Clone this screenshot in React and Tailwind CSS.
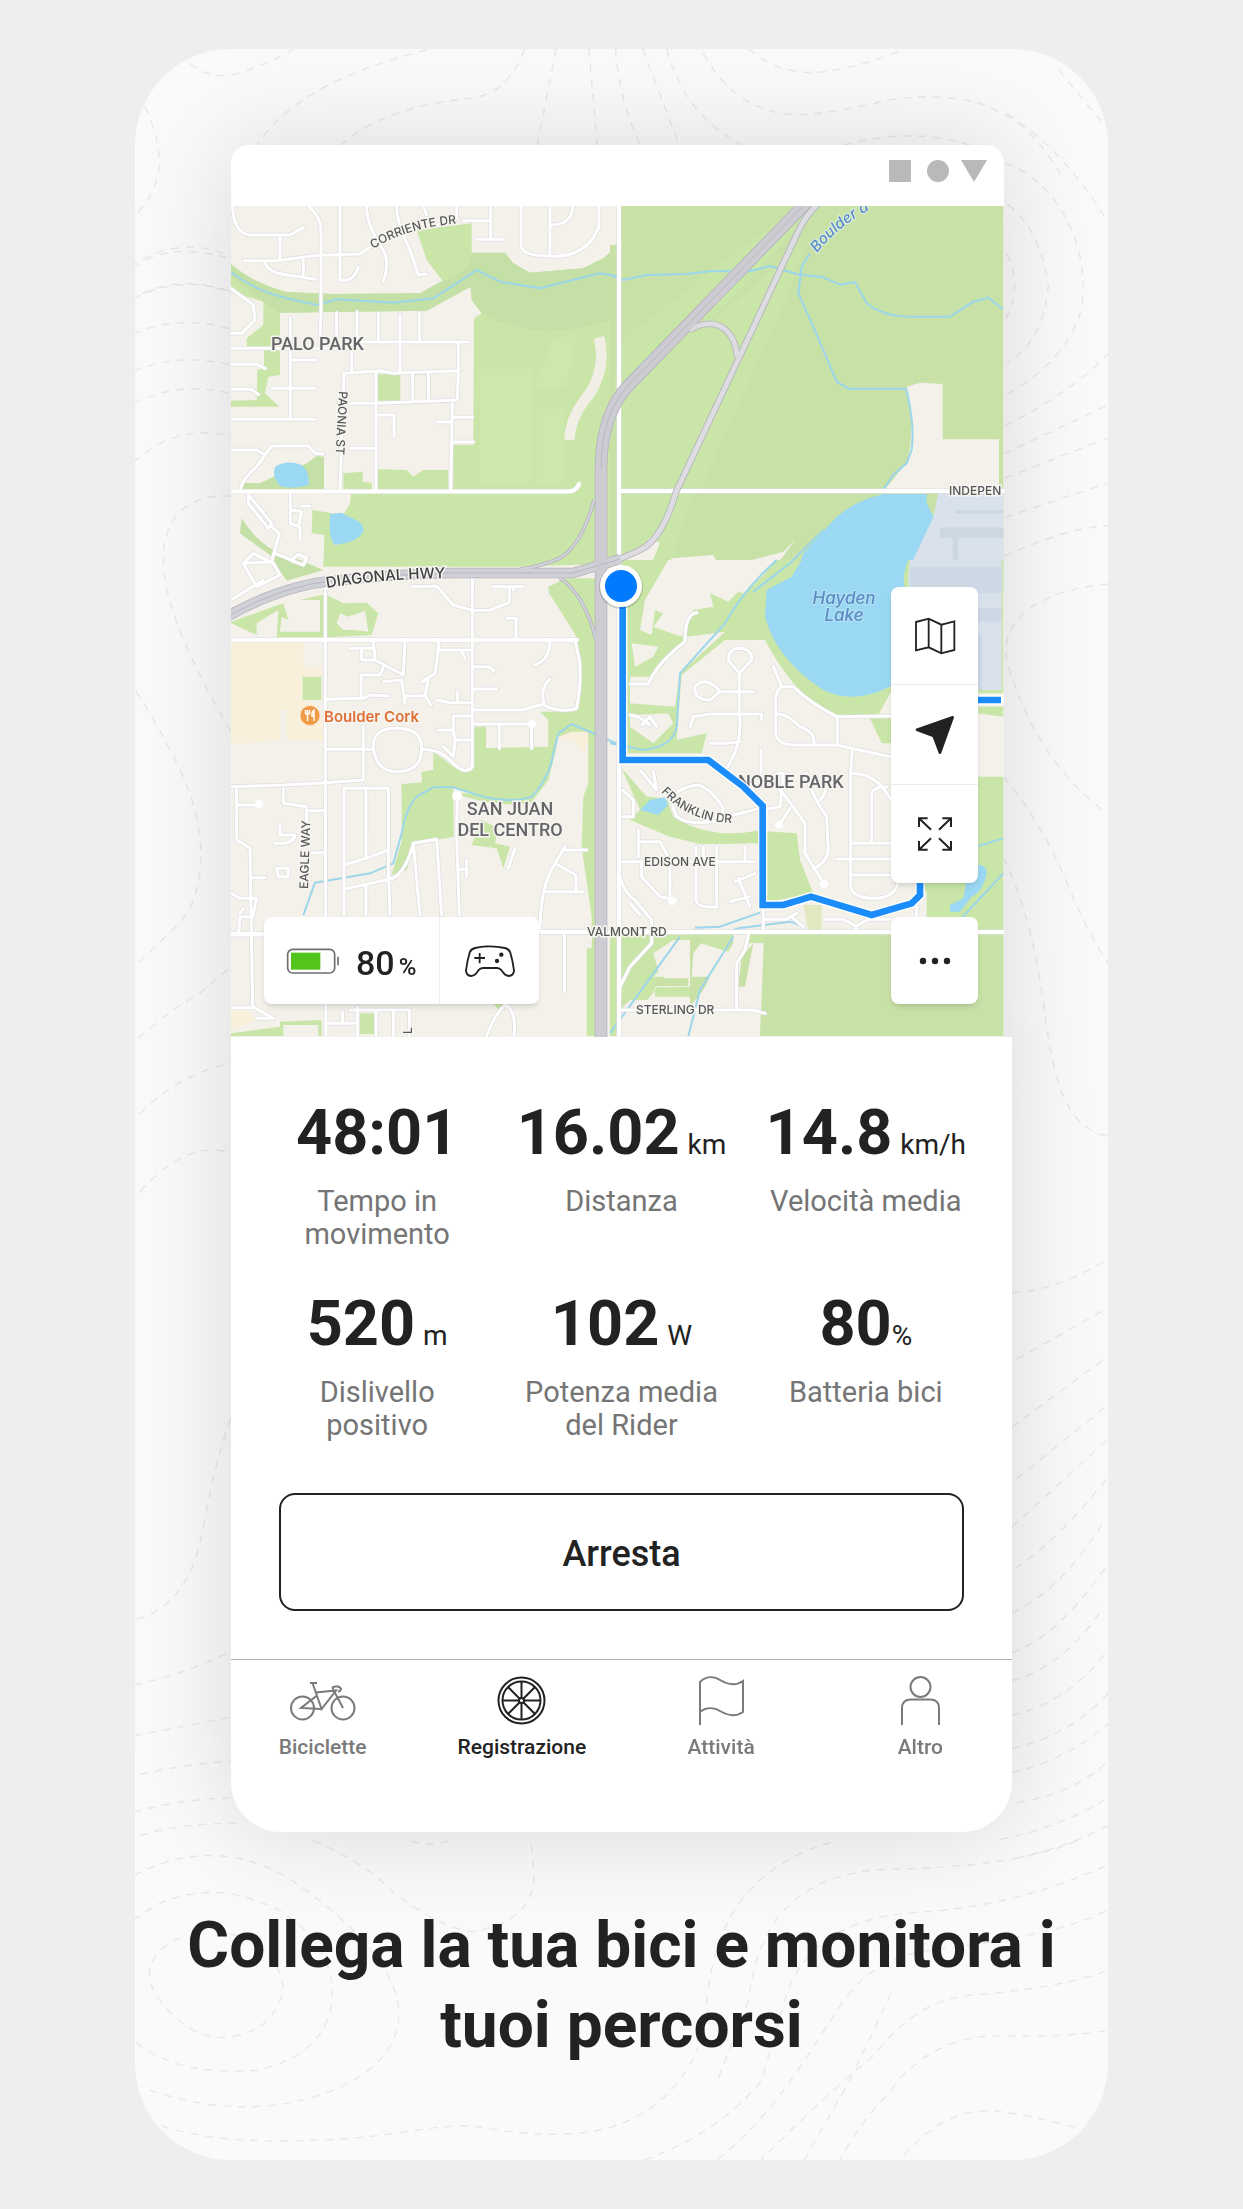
// Each layer of the map is drawn tile by tile, in units of a third of a pixel
const TILES = {
  nw: 'translate(220 130) scale(.33333)',
  ne: 'translate(610 130) scale(.33333)',
  sw: 'translate(220 580) scale(.33333)',
  se: 'translate(610 560) scale(.33333)',
}

const AREAS = [
  // north west
  ['nw', '#c9e6a8', 'M590 300L755 280V368H855L880 400L930 428L1090 415L1150 385L1195 345H1200V1300L900 1310H310L313 1215L275 1210L277 1140L370 1155L390 1120L393 1090H700V945H760L762 565L785 550L755 510L752 470L620 542L180 548V735L145 740L135 790L178 830H33V812L110 810L112 720L132 715V660H80V625L130 585V515L33 485V402Q100 460 200 486L340 492L600 490L668 452L620 390Z'],
  ['nw', '#c5e0a6', 'M755 368H855L880 400L930 428L1090 415L1150 385L1195 345V560Q960 650 785 550L755 510L752 470L620 542L180 548L130 515L33 440V402Q100 460 200 486L340 492L600 490L668 452Q750 430 755 368Z'],
  ['nw', '#c9e6a8', 'M473 733H541V812H473ZM473 1018L560 1020L580 1040L610 1020H685V1080H473ZM370 1030L428 1025V1055L455 1058V1080H370Z'],
  ['nw', '#c5e0a6', 'M65 1058L120 1060L160 1040L260 1000L290 978L312 980V1080H65ZM65 1165Q130 1270 240 1290L310 1320L200 1352L150 1275Q80 1225 60 1210Z'],
  ['nw', '#cce8ac', 'M1000 625L1070 615L1040 770H940ZM780 715H935V1060H780ZM950 835H1030V1060H950Z'],
  ['nw', '#9bd8f3', 'M165 1010Q200 990 240 1003Q270 1020 266 1065Q215 1080 180 1068Q155 1040 165 1010ZM330 1152L365 1148L385 1160Q430 1175 431 1200Q420 1235 345 1245Q325 1230 330 1152Z'],
  ['nw', '#c9e6a8', 'M985 1370L1040 1345H1130V1380H985Z'],
  // north east
  ['ne', '#c8e1a7', 'M25 228H1180V1380H0V345H25Z'],
  ['ne', '#c9e6a8', 'M0 900L620 228H560L25 640ZM33 1080H270L540 480L590 330L280 600L33 860ZM33 1090H250L180 1300H33Z'],
  ['ne', '#f3f1ea', 'M890 770L930 758L998 762V928H1167V1078H825L860 1035L895 990Q915 880 890 770ZM33 1290L90 1260L120 1222L150 1240L125 1300L100 1320L70 1300ZM555 1230L520 1265L330 1315L310 1275L185 1285L140 1380H430Q500 1310 555 1230Z'],
  ['ne', '#d9e2ec', 'M985 1090H1180V1390H895L890 1310L970 1160Z'],
  ['ne', '#cbd7e1', 'M990 1192H1180V1224H990ZM1028 1224H1045V1300H1180V1390H1010V1300H1028ZM1035 1140H1180V1150H1035Z'],
  ['ne', '#d9e2ec', 'M1045 1245H1180V1300H1070Q1040 1290 1045 1245Z'],
  ['ne', '#9bd8f3', 'M820 1092H950V1120L970 1160L900 1310L880 1390H470L500 1350H550L565 1320L580 1270L680 1160Q740 1110 820 1092Z'],
  // south west
  ['sw', '#f9f0dc', 'M33 185H250V260H305V290L248 292V360L290 375V405H310V482H200V390H180V480L80 490H33ZM1015 460L1050 440L1120 455L1090 520L1060 480L1015 475ZM33 1290H80L110 1320L33 1352Z'],
  ['sw', '#c9e6a8', 'M248 290H304V360H248ZM33 125L190 70L205 120L185 110L180 155H300V60L240 60L305 45H320L370 70L440 68L475 100L455 165L320 172H170L175 90L110 130V165L33 130ZM985 35L1020 0H1130V1368H1100V1105H1115V1010L1085 800L1090 650L1105 610V540L1105 455H1055L1015 470L985 600L935 665Q800 665 760 640L700 620L640 640L580 680L540 800L515 885L560 870L585 790L700 770V640L760 640H545V612H605V575L640 570V515L700 560L760 570V440H798V505H985V420L960 395H1060L1085 300L1070 170Z'],
  ['sw', '#c9e6a8', 'M785 720L835 745L825 790L870 800L850 865L830 805L755 795ZM700 640Q850 690 935 665L985 600L1010 500H985L760 505V640ZM545 780V612L700 600V770L585 790ZM420 1300H465V1362H420ZM180 1325L305 1320V1368H33V1360L180 1340ZM820 1270H850L835 1290Z'],
  ['sw', '#f3f1ea', 'M350 130L360 100L385 110L435 92L445 155L400 150L370 150ZM190 1335H295V1368H190Z'],
  // south east
  ['se', '#c9e6a8', 'M33 0H1180V400H840L800 475L680 470Q560 420 465 240H345L215 345L200 540L290 520L275 580H33Z'],
  ['se', '#f3f1ea', 'M175 0H500Q440 70 400 100L385 95L355 125L300 100L310 140L250 150L215 230L130 200L160 160L135 150L125 225L90 210L105 120L175 0ZM65 250L145 260L130 290L75 320ZM60 430V350H130L230 230L345 215L210 340L195 440ZM60 465L175 460L190 490L130 550L60 500Z'],
  ['se', '#9bd8f3', 'M575 0H895Q870 60 890 100V370L840 380Q730 435 640 390Q500 300 465 170L470 90L545 50Z'],
  ['se', '#d9e2ec', 'M900 0H1175V390H895V40Z'],
  ['se', '#ccd8e3', 'M900 20H1175V100H900ZM1100 145H1175V185H1100ZM1100 220H1115V390H1100Z'],
  ['se', '#c9e6a8', 'M1100 440H1180V470L1100 460ZM1100 650H1180V1110H950V1000L930 960H1100ZM780 475H850V550H815ZM35 625L110 710L170 715L190 770Q300 840 440 812L560 820L570 900L610 1000L450 1030V850L270 852L180 830L60 780L90 750Z'],
  ['se', '#c9e6a8', 'M33 1125L460 1122H1180V1428H450L465 1150H430L405 1280L380 1290L420 1122H370V1180L240 1140L165 1250H240V1320H60L20 1360L33 1428H0V1122Z'],
  ['se', '#f3f1ea', 'M60 1428V1390L165 1250H130L210 1175L240 1170V1280L170 1282L135 1280V1310H240L245 1350L300 1270L370 1150H465L450 1428ZM250 1175L325 1175L300 1230H250ZM130 1180L190 1140H245L235 1250H150Z'],
  ['se', '#c8e1a7', 'M462 1130H1180V1428H450ZM240 1130L280 1140L250 1180L245 1250H300L280 1290L240 1340ZM140 1255H235V1278H135ZM395 1190L430 1150L405 1280H385Z'],
  ['se', '#e1e8bf', 'M580 1035H635V1110H595Z'],
  ['se', '#9bd8f3', 'M90 750L120 720L165 712L175 735L145 765ZM1020 1035L1060 1015L1075 930L1110 915Q1140 920 1125 960Q1110 1000 1085 1010L1050 1055H1020Z'],
]

const STREAMS = [
  ['nw', 'M33 425Q100 480 200 505L290 525L350 508L520 518L640 505L770 420L840 455L960 475L1140 430L1200 440'],
  ['ne', 'M0 435L40 450L110 435L230 432L300 424L420 424L480 408L560 432L640 442L690 464L735 456L770 520Q820 560 900 560H1020L1090 515L1135 503L1178 537M600 370L575 410L565 490L610 590L680 755L715 776H888Q915 880 905 960L890 1000L850 1035L820 1078'],
  ['ne', 'M640 1200L540 1300L430 1385'],
  ['sw', 'M250 1005L285 908L450 880L520 850L545 760Q560 680 590 650L640 622H700L790 650Q880 670 935 650Q990 590 1000 520L1015 460L1055 432L1200 495'],
  ['se', 'M500 0Q400 90 345 190L210 340L200 500Q190 560 100 570L0 550M255 1103L330 1100L450 1058M370 1110L385 1105L540 1085L570 1095M210 1130L0 1420M370 1130L270 1290L235 1428M1100 860L1180 835M1040 1090L1180 940'],
]

const STREETS = [
  ['nw', 'M38 228Q40 310 90 315H210L250 293M180 318V388M72 392H170L300 375L420 372L460 345M265 228Q305 260 303 310V540L300 640M360 228V450Q400 460 415 410M440 228Q440 290 490 360Q510 400 490 455M530 228Q530 280 570 360L595 435L620 432M135 395Q140 430 220 437L285 448M250 385V435M610 228L620 255M710 228V265L650 285M812 228V325M730 272H812M770 328H850M903 228V350Q910 378 990 378Q1100 385 1137 290V228M990 228V375M995 285Q1055 285 1058 228'],
  ['nw', 'M33 475L100 525L105 570L65 610H33M33 655H390M33 703H110L135 715M33 778H95L115 793M33 868H240L285 868M211 565V865M211 690H288M155 775H285M350 548V620M411 545V640M475 550V636M540 555V725M598 548V636M395 636H745M395 640V725M360 1080L372 730L480 722L520 730L715 722V636M715 722L712 810L470 820H390M468 730V1080M578 725V815M625 725V815M470 855H522V920M390 955H465M697 820L692 1080M650 876H697M697 862H757M697 936H760'],
  ['nw', 'M33 960H110L132 972M60 1080Q65 1050 110 1010L155 948H265L285 970L310 972M85 1095V1120L145 1195L155 1180L90 1100M155 1190L178 1210L155 1295L70 1300L100 1270L160 1300L180 1335L110 1370L70 1300M211 1090V1180L235 1190L245 1145L215 1140M240 1190V1228M245 1128H270M165 1270L215 1290L235 1273L260 1285L250 1305L215 1292M758 1320V1380M820 1370H880V1380'],
  ['sw', 'M33 60L130 0M316 0V600L318 1368M757 0V560Q735 590 690 540Q650 505 605 508M575 20L650 18L700 75L760 92L810 90L868 68V20M825 20H910M860 115H888V172M390 205H460V180L465 240L550 285L555 180M425 205V240H465M490 262L480 285H423V355M316 358L430 355L450 345L505 348M490 305L545 300L555 370V348H610M655 180V210L645 280L605 305L625 300L615 345L632 375M655 210H750M725 215L735 235M757 260H805L822 272M757 327H830M650 360L690 368H757M712 335V365M990 180Q990 240 945 255M990 298Q960 320 972 372L905 390H757M972 375Q1020 400 1070 385Q1085 300 1078 240L1065 180'],
  ['sw', 'M757 432H935V505M838 432V505M700 408H757M700 408V450H655M700 450L705 480H755M705 480L700 530L670 500M316 508H455M430 440V600L316 608L190 615L33 620M460 505Q455 445 530 445Q605 445 605 505Q605 575 530 575Q470 575 460 505M50 620V780L90 805L98 1280L160 1315H110M50 675H120M190 625V670L260 680V740M270 692H316M275 818H316M165 790Q220 795 225 765H180V730M175 890H205V865H170ZM95 893H135M33 940L60 955H110L98 1010H60L55 1065M60 1000L70 985M33 1065H130M33 1283H98'],
  ['sw', 'M372 1005V625H505V870L510 1005M438 625V835L500 812M372 855L438 835M372 928L520 895Q560 870 580 790L600 1005M438 915V1005M580 790L650 778L665 1005M712 650L710 770L718 1005M720 868H740V840M740 868V890M885 805L865 865M1035 800L1005 850Q960 920 960 1050M1035 810H1100M1005 850L1068 885V940M970 935H1090M960 1057H1105M1033 1060V1235M316 1330H412V1280M390 1290H568V1340M412 1330V1368M368 1295V1330M468 1290V1368M520 1290V1368M568 1290V1368M855 1275Q825 1300 800 1368M855 1275Q890 1290 882 1368'],
  ['se', 'M60 372H115Q140 310 225 245Q225 160 260 158M388 340L355 300Q355 265 390 265Q430 270 425 300L388 340V460Q400 560 340 640M330 395Q290 345 255 380Q250 420 300 420L330 395H430M240 500L250 470L300 462H455V480M300 550H350L390 545M60 465L85 470L120 495M95 495L120 470L140 500M490 320L515 380H550Q600 430 680 470L840 468M515 380Q490 400 497 440V520Q500 555 560 555H680L840 590M500 462Q530 460 570 500Q615 515 612 550M682 475V555M727 570L722 640V980Q730 1015 790 1015Q860 1015 865 960M722 640Q800 640 840 715M785 850V700Q790 680 830 680M722 850H840M680 897H840M722 945H840'],
  ['se', 'M90 630L140 690L130 635M38 690L70 720V770H38M200 770Q160 690 260 675Q300 680 340 745L330 780Q240 800 200 770M330 775L450 745M453 570V640M500 640H520L510 740L455 750M500 640Q480 660 520 700L585 790V880L640 970M590 640Q600 700 650 770L655 870Q650 910 610 925M640 640Q660 690 630 720M540 745L505 800M25 620V930Q40 1000 75 1020L125 1080V1150L60 1220L30 1280L25 1428M33 905H435M85 810V890M85 845H150L180 900V1025M95 905V950L150 1010L200 1020M258 860V1020Q260 1045 320 1040V860M280 860V900M405 860V900M375 965L435 940M385 955L420 1040M360 1025L420 1010M60 1030L90 1065M460 1050V1115M460 1078H530L560 1060M550 1075L580 1100M645 1078H700L738 1098L775 1078H840M738 1098V1115M920 1040V1110M415 1125L405 1170L380 1210V1345M33 1350H430L465 1360'],
]

const MAIN_ROADS = 'M619 204V1037M231 491.500H570Q577 490 579 484M621 491H1003M231 640H577M231 934H270M540 932H590L760 932H1003'

const BIG_SHAPES = [
  { d: 'M818 204Q805 216 798 232L738 360L676 492Q662 540 640 550L604 566', width: 5, color: '#dcdce1' },
  { d: 'M690 330Q706 320 720 326Q736 335 737 357', width: 5, color: '#dcdce1' },
  { d: 'M594 500Q582 545 560 558Q540 567 520 569', width: 2, color: '#d3d2da' },
  { d: 'M596 640Q585 595 560 578', width: 2, color: '#d3d2da' },
  { d: 'M228 616Q285 584 340 580Q400 574 453 573L573 573L620 559', width: 9, color: '#d0d0d7' },
  { d: 'M806 203L628 386Q601 415 601 470V1037', width: 11, color: '#cdccd3' },
]

// Dashed height lines behind the phone; the groups stretch, the dashes do not
const CONTOURS = [
  ['translate(130 40) scale(.6313 .3333)', 'M95 70Q120 115 160 105Q210 80 260 27M470 30Q260 130 200 320M625 27Q600 160 540 175Q400 200 335 315M675 27L645 315M727 27L740 315M769 27Q775 180 808 315M812 27L870 315M850 27Q880 230 970 315M908 40Q960 220 1060 225Q1130 215 1200 180Q1320 150 1380 220Q1430 260 1480 420M980 27Q1030 110 1100 95Q1170 75 1225 27M1130 315Q1240 260 1330 315M0 680Q80 580 160 650M20 760Q90 700 160 760'],
  ['translate(130 1840) scale(.6313 .3333)', 'M290 0Q370 60 420 160Q500 270 545 272Q640 240 640 100L635 0M5 105Q130 -20 250 110C460 380 480 620 320 750Q180 850 20 740M5 240Q60 150 140 155C350 190 390 640 190 690Q70 700 10 605M80 290Q10 350 40 460Q90 590 145 590Q230 580 243 440Q230 290 130 270M50 855Q140 910 290 898C440 890 480 840 560 860Q680 900 760 860Q860 800 900 620M1110 5Q950 90 920 400Q910 500 915 520M445 0Q475 20 505 0M1545 75Q1400 200 1240 215Q1080 240 1040 460L1000 720Q930 880 815 957M1500 0Q1400 80 1200 85Q1000 100 980 480L930 720M1545 210Q1480 280 1260 330Q1180 350 1130 480C1060 680 1020 820 930 957M1545 390Q1480 440 1320 465Q1240 490 1180 640Q1080 800 1000 957M1545 570Q1480 590 1360 585Q1260 600 1200 760Q1150 860 1125 957M1225 945Q1290 800 1370 810Q1420 820 1500 860M1068 957Q1100 850 1140 720Q1180 560 1210 440'],
  ['translate(100 40) scale(.3333 .7015)', 'M135 95Q180 140 178 180Q165 225 100 252M100 326Q200 285 393 312M100 368Q240 335 393 358M100 419Q240 390 393 412M100 472Q240 445 393 463M100 518Q240 485 393 504M100 602Q230 545 393 565M393 650C230 645 150 700 210 800Q260 880 393 985M108 928Q180 980 240 1040C330 1130 320 1220 230 1262L100 1322M115 1422Q230 1375 300 1358L393 1320M120 1530Q230 1475 393 1458'],
  ['translate(1000 40) scale(.3333 .7015)', 'M175 42L325 128M20 105Q190 155 325 260M15 175C190 205 280 310 240 390Q190 460 20 505M25 235Q120 270 145 350Q130 430 20 460M20 305Q70 350 15 400M15 550Q220 500 325 447M10 590L325 520M15 624L325 567M15 680L325 631M10 736Q200 695 325 692M325 775C100 785 0 830 20 885Q110 1030 325 1103M10 1050Q120 1110 200 1200Q270 1280 325 1315M10 1165Q90 1240 130 1370C160 1490 200 1550 325 1562'],
  ['translate(130 1100) scale(.3333 .4847)', 'M30 188Q170 80 303 108M20 1070Q180 1040 220 880Q260 730 303 655M10 1206Q180 1180 303 1135M10 1310L303 1272M30 1390Q150 1370 303 1362M10 1468Q150 1440 310 1438M30 1516Q150 1490 330 1490'],
  ['translate(1000 1100) scale(.3333 .4847)', 'M35 396Q160 395 325 327M50 534L325 427M35 674L325 527M50 780L325 627M35 880L325 698M45 965Q170 910 325 776M35 1056Q170 1020 310 870M35 1138Q170 1110 325 955M35 1196Q190 1170 310 1045M35 1268Q210 1240 325 1132M35 1336Q210 1310 325 1222M35 1386Q200 1360 325 1285M50 1448Q220 1430 325 1362M0 1524Q180 1500 325 1437M50 1562Q200 1540 325 1495'],
]

const STATS = [
  { value: '48:01', label: 'Tempo in movimento' },
  { value: '16.02', unit: 'km', label: 'Distanza' },
  { value: '14.8', unit: 'km/h', label: 'Velocità media' },
  { value: '520', unit: 'm', label: 'Dislivello positivo' },
  { value: '102', unit: 'W', label: 'Potenza media del Rider' },
  { value: '80', unit: '%', tight: true, label: 'Batteria bici' },
]

function Contours() {
  return (
    <svg className="absolute inset-0 w-full h-full" viewBox="135 49 973 2110" preserveAspectRatio="none" fill="none" stroke="#e8e8e8" strokeWidth="1.4" strokeDasharray="8 7" aria-hidden="true">
      {CONTOURS.map(([transform, d]) => (
        <g key={transform} transform={transform}>
          <path d={d} vectorEffect="non-scaling-stroke" />
        </g>
      ))}
    </svg>
  )
}

function MapView() {
  return (
    <svg className="block w-full h-auto font-['Inter',sans-serif]" viewBox="231 206 773 831" role="img" aria-label="Boulder">
      <rect x="231" y="206" width="773" height="831" fill="#f3f1ea" />
      {AREAS.map(([tile, fill, d], i) => <path key={i} transform={TILES[tile]} fill={fill} d={d} />)}
      <g fill="none" strokeLinejoin="round">
        {STREAMS.map(([tile, d], i) => <path key={i} transform={TILES[tile]} stroke="#9bd6ea" strokeWidth="6" d={d} />)}
        <g strokeLinecap="round">
          <path transform={TILES.nw} d="M1137 622Q1160 710 1110 790Q1050 860 1048 930" stroke="#f1eee6" strokeWidth="32" strokeLinecap="butt" />
          {STREETS.map(([tile, d], i) => <path key={i} transform={TILES[tile]} stroke="#dddce1" strokeWidth="13" d={d} />)}
          <path d={MAIN_ROADS} stroke="#dddce1" strokeWidth="5" />
          {STREETS.map(([tile, d], i) => <path key={i} transform={TILES[tile]} stroke="#fff" strokeWidth="9" d={d} />)}
          <path d={MAIN_ROADS} stroke="#fff" strokeWidth="4" />
        </g>
        {BIG_SHAPES.map(({ d, width }) => <path key={d} d={d} stroke="#b4b2bd" strokeWidth={width + 1.6} />)}
        {BIG_SHAPES.map(({ d, width, color }) => <path key={d} d={d} stroke={color} strokeWidth={width} />)}
        <path d="M806 203L628 386Q601 415 601 470M228 616Q285 584 340 580Q400 574 453 573L573 573L620 559" stroke="#b9b7c1" />
        <g fill="#fff" stroke="none">
          <circle cx="457" cy="796" r="5" /><circle cx="259" cy="804" r="4" /><circle cx="532" cy="724" r="4" />
          <circle cx="824" cy="884" r="4" /><circle cx="779" cy="825" r="4" /><circle cx="672" cy="901" r="4" />
        </g>
      </g>

      <g fill="none">
        <path id="corriente" d="M373 249Q415 223 475 223" />
        <path id="diagonal" d="M327 588Q385 578 460 578" />
        <path id="franklin" d="M661 792Q695 828 750 822" />
        <path id="boulder" d="M817 253Q840 224 880 204" />
      </g>
      <g fill="#58585b" stroke="#f6f4ef" strokeWidth="3" paintOrder="stroke" fontWeight="500" fontSize="12">
        <text><textPath href="#corriente">CORRIENTE DR</textPath></text>
        <text fontSize="15" fill="#3f3f42"><textPath href="#diagonal">DIAGONAL HWY</textPath></text>
        <text><textPath href="#franklin">FRANKLIN DR</textPath></text>
        <text transform="translate(339 391) rotate(93)">PAONIA ST</text>
        <text transform="translate(308 889) rotate(-88)">EAGLE WAY</text>
        <text transform="translate(412 1034) rotate(-90)">L</text>
        <text x="644" y="866">EDISON AVE</text>
        <text x="587" y="936">VALMONT RD</text>
        <text x="636" y="1014">STERLING DR</text>
        <text x="949" y="495">INDEPEN</text>
        <g fontSize="18" fill="#66666a" className="font-['Roboto',sans-serif]">
          <text x="271" y="350">PALO PARK</text>
          <text x="738" y="788">NOBLE PARK</text>
          <g textAnchor="middle">
            <text x="510" y="815">SAN JUAN</text>
            <text x="510" y="836">DEL CENTRO</text>
          </g>
        </g>
        <g fontStyle="italic" fontSize="17" fill="#5b8bc4" stroke="#b6e1f3" strokeWidth="2">
          <text fontSize="15" stroke="#dcefe0"><textPath href="#boulder">Boulder a</textPath></text>
          <text x="844" y="604" textAnchor="middle">Hayden</text>
          <text x="844" y="621" textAnchor="middle">Lake</text>
        </g>
        <text x="324" y="722" fontSize="15" fontWeight="600" fill="#e07038">Boulder Cork</text>
      </g>
      <circle cx="310" cy="715.500" r="10" fill="#f19a46" stroke="#fbe3c8" />
      <path d="M305.500 710V714M307.500 710V721M309.500 710V714M305.500 714H309.500M314 721V710Q311.500 712 312 716H314" fill="none" stroke="#fff" strokeWidth="1.5" />

      <g transform={TILES.se} fill="none" strokeLinejoin="miter">
        <path d="M38 100V600H295L400 680L458 738V1035H520L603 1010L785 1065L905 1030L930 1005V940M1050 420H1180" stroke="#fff" strokeWidth="28" />
        <path d="M38 100V600H295L400 680L458 738V1035H520L603 1010L785 1065L905 1030L930 1005V940M1050 420H1173" stroke="#1b8dfb" strokeWidth="20" />
      </g>
      <circle cx="621" cy="587" r="22" fill="#000" opacity=".16" />
      <circle cx="621" cy="586" r="21" fill="#fff" />
      <circle cx="621" cy="586" r="16" fill="#007aff" />
    </svg>
  )
}

function Stat({ value, unit, tight, label }) {
  return (
    <div className="flex flex-col items-center text-center px-4">
      <dd className={`order-first flex items-baseline whitespace-nowrap text-[#222] ${tight ? 'gap-0' : 'gap-2'}`}>
        <span className="text-[63px] leading-[64px] font-bold">{value}</span>
        {unit && <span className="text-[28px] leading-8">{unit}</span>}
      </dd>
      <dt className="mt-5 text-[29px] leading-[33px] text-[#757575]">{label}</dt>
    </div>
  )
}

function NavItem({ label, active, children }) {
  return (
    <a href="#" aria-current={active ? 'page' : undefined}
      className={`flex flex-col items-center gap-2 font-medium ${active ? 'text-[#222]' : 'text-[#7a7a7a]'}`}>
      <span className="h-[49px] flex items-center">{children}</span>
      <span className="text-[21px] leading-7">{label}</span>
    </a>
  )
}

const line = { fill: 'none', stroke: 'currentColor', strokeWidth: 2, 'aria-hidden': true }

export default function App() {
  return (
    <div className="min-h-screen bg-[#eee] pt-[49px] pb-[50px] font-['Roboto',sans-serif] text-[#222]">
      <main className="relative max-w-[973px] mx-auto rounded-[96px] bg-[#fafafa] overflow-hidden px-24 pt-24 pb-[94px]">
        <Contours />

        <div className="relative drop-shadow-[0_0_48px_rgba(0,0,0,0.13)]">
          {/* Status bar and map are a touch narrower than the sheet below */}
          <div className="relative mr-2">
            <div className="flex justify-end items-start gap-4 h-[61px] pr-[17px] pt-[15px] bg-white rounded-t-[18px]">
              <span className="size-[22px] bg-[#b9b9b9]" />
              <span className="size-[22px] rounded-full bg-[#b9b9b9]" />
              <svg className="-ml-1" width="26" height="22" viewBox="0 0 26 22" aria-hidden="true"><path d="M0 0H26L13 22Z" fill="#b9b9b9" /></svg>
            </div>
            <MapView />

            <div className="absolute inset-x-0 bottom-[33px] pr-[26px] pl-[33px] flex justify-between items-end">
              <div className="flex h-[87px] bg-white rounded-lg shadow-md">
                <div className="flex items-center w-[176px] pl-[22px] border-r border-[#ececec]">
                  <svg width="54" height="28" viewBox="198 1095 162 84" aria-hidden="true">
                    <rect x="203" y="1102" width="141" height="71" rx="15" fill="none" stroke="#6e6e6e" strokeWidth="5" />
                    <rect x="213" y="1112" width="88" height="51" fill="#52c41a" />
                    <path d="M354 1124V1150" stroke="#6e6e6e" strokeWidth="5" />
                  </svg>
                  <span className="ml-4 mt-1 flex items-baseline gap-1 text-[34px] leading-10 font-medium">
                    80<span className="text-2xl">%</span>
                  </span>
                </div>
                <button aria-label="Controller" className="w-[99px] flex items-center justify-center">
                  <svg width="52" height="36" viewBox="729 1083 156 108" fill="none" stroke="#222" strokeWidth="5.5" strokeLinejoin="round" aria-hidden="true">
                    <path d="M762 1098Q785 1093 807 1093T852 1098Q864 1101 868 1112Q876 1138 879 1166Q878 1181 863 1182Q853 1182 846 1171Q839 1159 828 1158H786Q775 1159 768 1171Q761 1182 750 1182Q736 1181 735 1166Q738 1138 746 1112Q750 1101 762 1098Z" />
                    <path d="M776 1113V1144M760 1128H792" />
                    <g fill="#222" stroke="none"><circle cx="841" cy="1118" r="6.500" /><circle cx="828" cy="1137" r="6.500" /></g>
                  </svg>
                </button>
              </div>

              <div className="flex flex-col gap-[34px] w-[87px]">
                <div className="flex flex-col bg-white rounded-lg shadow-md divide-y divide-[#ececec]">
                  <button aria-label="Mappa" className="h-[98px] flex items-center justify-center">
                    <svg width="44" height="40" viewBox="906 164 132 120" fill="none" stroke="#222" strokeWidth="5.5" aria-hidden="true">
                      <path d="M915 182L953 172L991 190L1030 180V266L991 276L953 258L915 267ZM953 172V258M991 190V276" />
                    </svg>
                  </button>
                  <button aria-label="Posizione" className="h-[100px] flex items-center justify-center">
                    <svg width="44" height="44" viewBox="902 456 132 132" fill="#222" stroke="#222" strokeWidth="8" strokeLinejoin="round" aria-hidden="true">
                      <path d="M1021 469L983 575L964 525L914 506Z" />
                    </svg>
                  </button>
                  <button aria-label="Schermo intero" className="h-[98px] flex items-center justify-center">
                    <svg width="40" height="40" viewBox="912 763 120 120" fill="none" stroke="#222" strokeWidth="6" aria-hidden="true">
                      <path d="M924 802V776H950M924 776L960 810M994 776H1020V802M1020 776L984 810M924 844V870H950M924 870L960 836M994 870H1020V844M1020 870L984 836" />
                    </svg>
                  </button>
                </div>
                <button aria-label="Altre opzioni" className="h-[87px] flex items-center justify-center bg-white rounded-lg shadow-md">
                  <svg width="32" height="8" viewBox="0 0 32 8" fill="#222" aria-hidden="true">
                    <circle cx="4" cy="4" r="3.200" /><circle cx="16" cy="4" r="3.200" /><circle cx="28" cy="4" r="3.200" />
                  </svg>
                </button>
              </div>
            </div>
          </div>

          <div className="bg-white rounded-b-[50px] pt-16 pb-[71px]">
            <dl className="grid grid-cols-3 gap-y-[41px] px-6">
              {STATS.map((stat) => <Stat key={stat.label} {...stat} />)}
            </dl>

            <div className="px-12 pt-[51px] pb-12">
              <button className="w-full h-[118px] rounded-2xl border-2 border-[#222] pt-1 text-4xl font-medium">Arresta</button>
            </div>

            <nav className="border-t border-[#b0b0b0]">
              <div className="grid grid-cols-4 -mx-2 pt-4">
                <NavItem label="Biciclette">
                  <svg width="66" height="40" viewBox="0 0 66 40" {...line}>
                    <circle cx="12.500" cy="27" r="11.500" /><circle cx="53" cy="27" r="11.500" />
                    <path d="M20 2H27M22.500 2L31.600 28L46 9.500L25.500 11.500M31.600 28L11 27L27 14.500M53 27L43 8Q41 5 48 5.500Q54 8 48 11" />
                  </svg>
                </NavItem>
                <NavItem label="Registrazione" active>
                  <svg width="49" height="49" viewBox="0 0 49 49" {...line}>
                    <circle cx="24.500" cy="24.500" r="23" /><circle cx="24.500" cy="24.500" r="19" /><circle cx="24.500" cy="24.500" r="2.500" />
                    <path d="M24.500 5.500V22M24.500 27V43.500M5.500 24.500H22M27 24.500H43.500M11 11L22.700 22.700M26.300 26.300L38 38M38 11L26.300 22.700M22.700 26.300L11 38" />
                  </svg>
                </NavItem>
                <NavItem label="Attività">
                  <svg width="45" height="49" viewBox="0 0 45 49" {...line}>
                    <path d="M1 49V6C7 0 15 0 22 4.500C30 9 37 10 44 5V36C37 41 30 40 22 35.500C15 31 7 31 1 36" />
                  </svg>
                </NavItem>
                <NavItem label="Altro">
                  <svg width="39" height="49" viewBox="0 0 39 49" {...line}>
                    <circle cx="19.500" cy="11" r="10" />
                    <path d="M1 49V32Q1 23.500 10 23.500H29Q38 23.500 38 32V49" />
                  </svg>
                </NavItem>
              </div>
            </nav>
          </div>
        </div>

        <h1 className="relative -mx-12 mt-[74px] text-center text-[64px] leading-[80px] font-bold">
          Collega la tua bici e monitora i tuoi percorsi
        </h1>
      </main>
    </div>
  )
}
